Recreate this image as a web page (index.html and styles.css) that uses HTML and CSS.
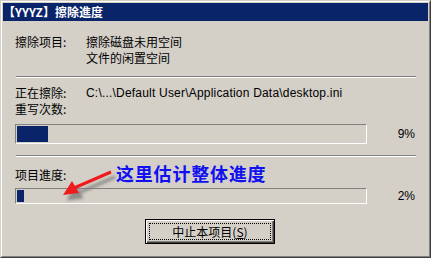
FILE: index.html
```html
<!DOCTYPE html>
<html>
<head>
    <title>擦除進度</title>
    <link rel="stylesheet" href="styles.css">
</head>
<body>
    <div class="window">
        <div class="frame">
            <div class="titlebar"><span class="brand">【YYYZ】</span>擦除進度</div>
            <div class="content">
                <div class="row">
                    <span class="label">擦除项目:</span>
                    <span class="value">擦除磁盘未用空间<br>文件的闲置空间</span>
                </div>
                <div class="sep sep-top"></div>
                <div class="row row-wipe">
                    <span class="label">正在擦除:</span>
                    <span class="value path">C:\...\Default User\Application Data\desktop.ini</span>
                </div>
                <div class="row">
                    <span class="label">重写次数:</span>
                </div>
                <div class="progress-row">
                    <div class="bar"><div class="fill" style="width: 9%"></div></div>
                    <span class="pct">9%</span>
                </div>
                <div class="sep sep-mid"></div>
                <div class="row row-total">
                    <span class="label">项目進度:</span>
                </div>
                <div class="progress-row small">
                    <div class="bar"><div class="fill" style="width: 2%"></div></div>
                    <span class="pct">2%</span>
                </div>
                <div class="actions">
                    <button class="btn"><span class="focus">中止本项目(<u>S</u>)</span></button>
                </div>
            </div>
        </div>

        <!-- annotation drawn on top of the dialog -->
        <div class="note">这里估计整体進度</div>
        <svg class="arrow" width="431" height="258" viewBox="0 0 431 258">
            <defs>
                <filter id="shadow" x="-20%" y="-50%" width="160%" height="220%">
                    <feGaussianBlur stdDeviation="1.6"/>
                </filter>
            </defs>
            <g transform="translate(4 5)" fill="#7a7a7a" stroke="#7a7a7a" filter="url(#shadow)" opacity="0.8">
                <path d="M111 172 L74 188" stroke-width="3" fill="none"/>
                <path d="M63 195 L72 181 L79 193 Z"/>
            </g>
            <path d="M111 172 L74 188" stroke="#ee1c1c" stroke-width="3" fill="none"/>
            <path d="M63 195 L72 181 L79 193 Z" fill="#ee1c1c"/>
        </svg>
    </div>
</body>
</html>
```

FILE: styles.css
```css
* {
    padding: 0;
    margin: 0;
    box-sizing: border-box
}

body {
    background-color: #d4d0c8;
    font-family: "Liberation Sans", "Noto Sans CJK SC", sans-serif;
    font-size: 12px;
    color: #000
}

.window {
    position: relative;
    width: 431px;
    height: 258px;
    border: 1px solid;
    border-color: #d4d0c8 #404040 #404040 #d4d0c8
}

.frame {
    height: 100%;
    border: 1px solid;
    border-color: #fff #808080 #808080 #fff;
    padding: 1px
}

.titlebar {
    height: 18px;
    line-height: 18px;
    background-color: #0a246a;
    color: #fff;
    font-weight: bold;
    font-family: "Noto Sans CJK SC", sans-serif;
    font-size: 12px
}

.content {
    padding: 13px 0 0 12px;
    width: 413px
}

.row {
    display: flex;
    line-height: 16px
}

.label {
    width: 71px;
    flex: none;
    font-family: "Noto Sans CJK SC", sans-serif
}

.value {
    font-family: "Noto Sans CJK SC", sans-serif
}

.value.path {
    font-family: "Liberation Sans", sans-serif;
    font-size: 12px;
    letter-spacing: 0.2px
}

.sep {
    margin-left: 1px;
    height: 2px;
    border-top: 1px solid #808080;
    border-bottom: 1px solid #fff
}

.sep-top {
    margin-top: 10px
}

.row-wipe {
    margin-top: 7px
}

.progress-row {
    display: flex;
    align-items: center;
    margin-top: 7px
}

.bar {
    width: 352px;
    height: 20px;
    border: 1px solid;
    border-color: #808080 #fff #fff #808080;
    padding: 1px
}

.fill {
    height: 100%;
    background-color: #0a246a
}

.pct {
    width: 48px;
    text-align: right;
    font-size: 12px
}

.small .bar {
    height: 16px
}

.sep-mid {
    margin-top: 11px
}

.row-total {
    margin-top: 10px
}

.small {
    margin-top: 5px
}

.actions {
    padding-left: 130px;
    margin-top: 15px
}

.btn {
    width: 130px;
    height: 25px;
    background-color: #d4d0c8;
    border: 1px solid #000;
    box-shadow: inset 1px 1px 0 #fff, inset -1px -1px 0 #404040, inset -2px -2px 0 #808080;
    padding: 3px;
    font-family: "Noto Sans CJK SC", sans-serif;
    font-size: 12px;
    color: #000
}

.focus {
    display: block;
    height: 100%;
    border: 1px dotted #000;
    line-height: 15px
}

.note {
    position: absolute;
    left: 115px;
    top: 159px;
    font-family: "Noto Sans CJK SC", sans-serif;
    font-size: 18px;
    font-weight: bold;
    letter-spacing: 0.8px;
    color: #1010f0;
    line-height: 26px
}

.arrow {
    position: absolute;
    left: -1px;
    top: -1px
}
```
